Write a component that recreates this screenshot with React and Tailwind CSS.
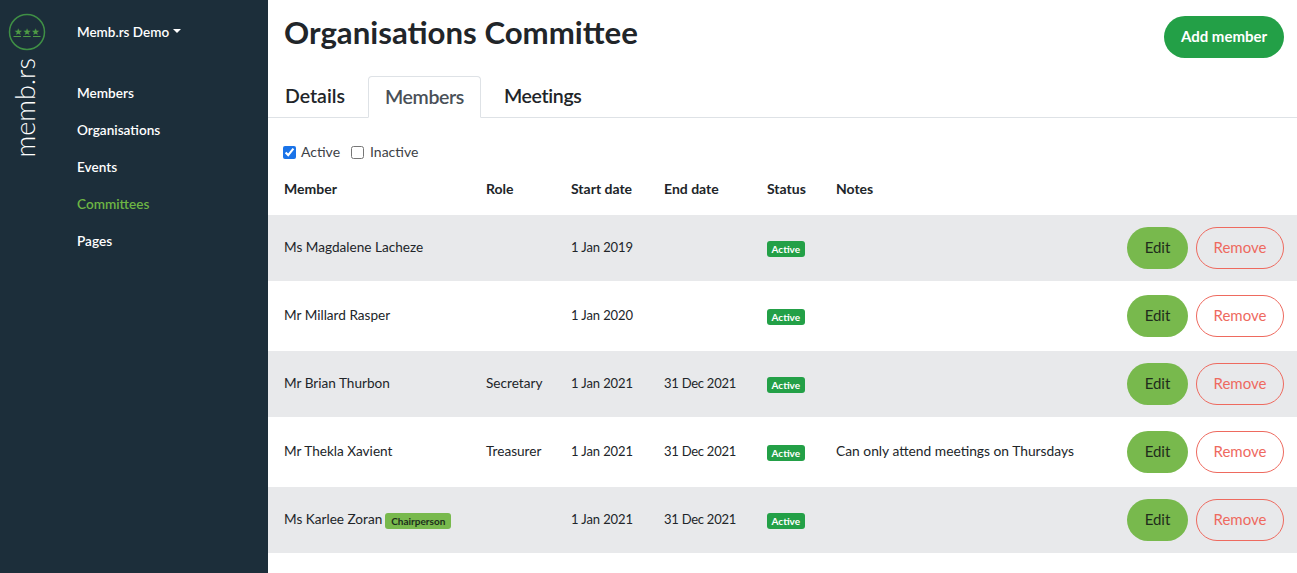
const navItems = ['Members', 'Organisations', 'Events', 'Committees', 'Pages'];

const rows = [
  { name: 'Ms Magdalene Lacheze', role: '', start: '1 Jan 2019', end: '', notes: '' },
  { name: 'Mr Millard Rasper', role: '', start: '1 Jan 2020', end: '', notes: '' },
  { name: 'Mr Brian Thurbon', role: 'Secretary', start: '1 Jan 2021', end: '31 Dec 2021', notes: '' },
  { name: 'Mr Thekla Xavient', role: 'Treasurer', start: '1 Jan 2021', end: '31 Dec 2021', notes: 'Can only attend meetings on Thursdays' },
  { name: 'Ms Karlee Zoran', badge: 'Chairperson', role: '', start: '1 Jan 2021', end: '31 Dec 2021', notes: '' },
];

const cols = 'grid grid-cols-[202px_85px_93px_103px_69px_1fr_auto] items-center pl-4 pr-[13px]';

const Logo = () => (
  <svg width="38" height="38" viewBox="0 0 38 38" className="block">
    <circle cx="19" cy="19" r="17.5" fill="none" stroke="#3f8f45" strokeWidth="1.5" />
    <text x="19" y="21.5" textAnchor="middle" fontSize="9.5" fontFamily="'DejaVu Sans', sans-serif" letterSpacing="0.2" fill="#4f9a45">★★★</text>
    <path d="M5.5 23.5h7.5M15.2 23.5h7.5M25 23.5h7.5" stroke="#4f9a45" strokeWidth="1" />
  </svg>
);

export default function App() {
  return (
    <div className="flex h-[573px] w-[1297px] overflow-hidden bg-white font-['Lato',sans-serif] text-[#212529]">
      <aside className="flex w-[268px] shrink-0 bg-[#1c2e3a] text-white">
        <div className="flex w-[53px] shrink-0 flex-col items-center pt-[13px]">
          <Logo />
          <span className="mt-[7px] mr-1 rotate-180 font-light text-[27px] leading-[27px] [writing-mode:vertical-rl]">memb.rs</span>
        </div>
        <nav className="pl-6 pt-[22px]">
          <div className="flex h-5 items-center text-[13.5px] font-semibold">
            Memb.rs Demo
            <span className="ml-1 mb-0.5 border-x-[4.5px] border-t-[4.5px] border-x-transparent border-t-white" />
          </div>
          <ul className="mt-[33px] text-[13.6px] font-semibold">
            {navItems.map((item) => (
              <li key={item} className={`flex h-[37px] items-center ${item === 'Committees' ? 'text-[#6db544]' : ''}`}>
                {item}
              </li>
            ))}
          </ul>
        </nav>
      </aside>

      <main className="min-w-0 flex-1">
        <header className="flex items-start justify-between pl-4 pr-[13px] pt-4">
          <h1 className="-mt-px text-[31.2px] leading-[34px] font-bold">Organisations Committee</h1>
          <button className="h-[42px] w-[120px] rounded-full bg-[#23a047] pb-0.5 text-[15px] font-bold text-white">Add member</button>
        </header>

        <div className="mt-[18px] flex h-[42px] border-b border-[#dee2e6] text-[19.5px] font-semibold">
          <div className="w-[100px] pl-[17px] pt-[5px]">Details</div>
          <div className="-mb-px w-[113px] rounded-t border border-[#dee2e6] border-b-white bg-white pt-[5px] text-center tracking-[-0.35px] text-[#495057]">Members</div>
          <div className="pl-[23px] pt-[5px] tracking-[-0.35px]">Meetings</div>
        </div>

        <div className="mt-[26px] flex h-4 items-center pl-[15px] text-sm text-[#3d4247]">
          <label className="flex items-center">
            <input type="checkbox" defaultChecked className="m-0 h-[13px] w-[13px] accent-[#1a73e8]" />
            <span className="ml-[5px]">Active</span>
          </label>
          <label className="ml-[11px] flex items-center">
            <input type="checkbox" className="m-0 h-[13px] w-[13px]" />
            <span className="ml-[6px]">Inactive</span>
          </label>
        </div>

        <div className={`${cols} mt-[17px] h-[24px] text-sm font-bold`}>
          <div>Member</div>
          <div>Role</div>
          <div>Start date</div>
          <div>End date</div>
          <div>Status</div>
          <div>Notes</div>
        </div>

        <div className="mt-[13px]">
          {rows.map((row, i) => (
            <div
              key={row.name}
              className={`${cols} h-[68px] border-y border-transparent bg-clip-padding text-[13.6px] ${i % 2 === 0 ? 'bg-[#e8e9eb]' : 'bg-white'}`}
            >
              <div className="flex items-center">
                <span className="pb-px">{row.name}</span>
                {row.badge && (
                  <span className="ml-[3px] mt-[2px] rounded-[3px] bg-[#78b94d] px-[6px] py-0.5 text-[10px] leading-3 font-bold text-[#1c2e1c]">{row.badge}</span>
                )}
              </div>
              <div className="pb-px">{row.role}</div>
              <div className="text-[13px] tracking-[-0.1px]">{row.start}</div>
              <div className="text-[13px] tracking-[-0.25px]">{row.end}</div>
              <div>
                <span className="mt-[2px] block w-fit rounded-[3px] bg-[#23a047] px-[4.5px] py-0.5 text-[10px] leading-3 font-bold text-white">Active</span>
              </div>
              <div className="pb-px text-[13.8px]">{row.notes}</div>
              <div className="flex gap-2">
                <button className="h-[42px] w-[61px] rounded-full bg-[#78b94d] pb-0.5 text-[15px] text-[#1f2d1c]">Edit</button>
                <button className="h-[42px] w-[88px] rounded-full border border-[#ee6a5f] pb-0.5 text-[15px] text-[#ee6a5f]">Remove</button>
              </div>
            </div>
          ))}
        </div>
      </main>
    </div>
  );
}
